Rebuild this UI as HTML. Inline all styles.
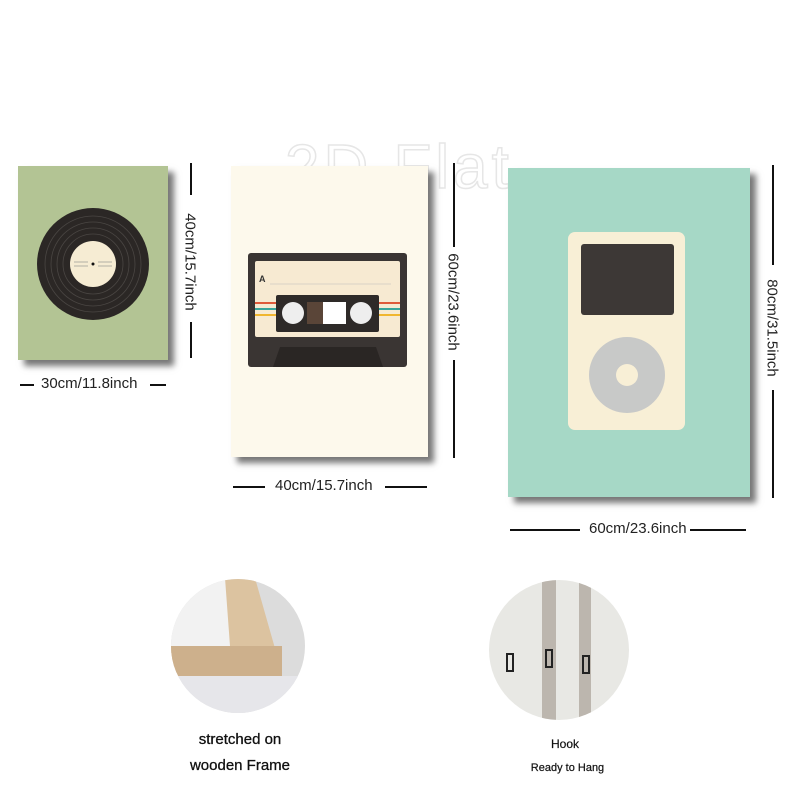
<!DOCTYPE html>
<html><head><style>
body{margin:0;width:800px;height:800px;background:#fff;position:relative;overflow:hidden;font-family:"Liberation Sans",sans-serif}
.a{position:absolute}
.t{font-size:15px;color:#222;white-space:nowrap}
.ln{position:absolute;background:#111}
</style></head><body>
<div class="a" style="left:285px;top:132px;font-size:62px;color:#fff;-webkit-text-stroke:1.5px #e6e6e6;letter-spacing:4px;">2D Flat</div>

<!-- panel1 -->
<div class="a" style="left:18px;top:166px;width:150px;height:194px;background:#b3c494;box-shadow:6px 6px 6px #777"></div>
<svg class="a" style="left:18px;top:166px" width="150" height="194">
<circle cx="75" cy="98" r="56" fill="#2b2725"/>
<circle cx="75" cy="98" r="48" fill="none" stroke="#4a4643" stroke-width="0.8"/>
<circle cx="75" cy="98" r="42" fill="none" stroke="#4a4643" stroke-width="0.8"/>
<circle cx="75" cy="98" r="36" fill="none" stroke="#4a4643" stroke-width="0.8"/>
<circle cx="75" cy="98" r="30" fill="none" stroke="#4a4643" stroke-width="0.8"/>
<circle cx="75" cy="98" r="23" fill="#f6ecd3"/>
<line x1="56" y1="96" x2="70" y2="96" stroke="#888" stroke-width="0.6"/><line x1="80" y1="96" x2="94" y2="96" stroke="#888" stroke-width="0.6"/>
<line x1="56" y1="100" x2="70" y2="100" stroke="#888" stroke-width="0.6"/><line x1="80" y1="100" x2="94" y2="100" stroke="#888" stroke-width="0.6"/>
<circle cx="75" cy="98" r="1.5" fill="#111"/>
</svg>
<div class="ln" style="left:190px;top:163px;width:1.5px;height:32px"></div>
<div class="ln" style="left:190px;top:322px;width:1.5px;height:36px"></div>
<div class="a t" style="left:190px;top:262px;transform:translate(-50%,-50%) rotate(90deg)">40cm/15.7inch</div>
<div class="ln" style="left:20px;top:384px;width:14px;height:1.5px"></div>
<div class="ln" style="left:150px;top:384px;width:16px;height:1.5px"></div>
<div class="a t" style="left:41px;top:375px">30cm/11.8inch</div>

<!-- panel2 -->
<div class="a" style="left:231px;top:166px;width:197px;height:291px;background:#fdf9ec;box-shadow:6px 6px 6px #777"></div>
<svg class="a" style="left:248px;top:253px" width="160" height="115">
<rect x="0" y="0" width="159" height="114" rx="3" fill="#3a3533"/>
<rect x="7" y="8" width="145" height="76" rx="2" fill="#f7ead2"/>
<text x="11" y="29" font-size="9" font-weight="bold" font-family="Liberation Sans" fill="#333">A</text>
<line x1="22" y1="31" x2="143" y2="31" stroke="#bbb" stroke-width="0.6"/>
<rect x="7" y="49" width="145" height="2" fill="#e05a3a"/>
<rect x="7" y="55" width="145" height="2" fill="#3aa59a"/>
<rect x="7" y="61" width="145" height="2" fill="#f0b630"/>
<rect x="28" y="42" width="103" height="37" rx="2" fill="#2e2a28"/>
<circle cx="45" cy="60" r="11" fill="#eee"/><circle cx="113" cy="60" r="11" fill="#eee"/>
<rect x="59" y="49" width="16" height="22" fill="#5a4538"/>
<rect x="75" y="49" width="23" height="22" fill="#fff"/>
<path d="M25 114 L32 94 L128 94 L135 114Z" fill="#2a2624"/>
</svg>
<div class="ln" style="left:453px;top:163px;width:1.5px;height:84px"></div>
<div class="ln" style="left:453px;top:360px;width:1.5px;height:98px"></div>
<div class="a t" style="left:453px;top:302px;transform:translate(-50%,-50%) rotate(90deg)">60cm/23.6inch</div>
<div class="ln" style="left:233px;top:486px;width:32px;height:1.5px"></div>
<div class="ln" style="left:385px;top:486px;width:42px;height:1.5px"></div>
<div class="a t" style="left:275px;top:477px">40cm/15.7inch</div>

<!-- panel3 -->
<div class="a" style="left:508px;top:168px;width:242px;height:329px;background:#a6d8c6;box-shadow:6px 6px 6px #777"></div>
<div class="a" style="left:568px;top:232px;width:117px;height:198px;background:#f8efd6;border-radius:7px"></div>
<div class="a" style="left:581px;top:244px;width:93px;height:71px;background:#3d3836;border-radius:3px"></div>
<div class="a" style="left:589px;top:337px;width:76px;height:76px;background:#c8c9c8;border-radius:50%"></div>
<div class="a" style="left:616px;top:364px;width:22px;height:22px;background:#f8efd6;border-radius:50%"></div>
<div class="ln" style="left:772px;top:165px;width:1.5px;height:100px"></div>
<div class="ln" style="left:772px;top:390px;width:1.5px;height:108px"></div>
<div class="a t" style="left:772px;top:328px;transform:translate(-50%,-50%) rotate(90deg)">80cm/31.5inch</div>
<div class="ln" style="left:510px;top:529px;width:70px;height:1.5px"></div>
<div class="ln" style="left:690px;top:529px;width:56px;height:1.5px"></div>
<div class="a t" style="left:589px;top:520px">60cm/23.6inch</div>

<!-- circles -->
<svg class="a" style="left:170px;top:578px" width="136" height="136">
<defs><clipPath id="c1"><circle cx="68" cy="68" r="67"/></clipPath></defs>
<g clip-path="url(#c1)">
<rect width="136" height="136" fill="#dcdcdc"/>
<rect x="0" y="0" width="60" height="70" fill="#f2f2f2"/>
<path d="M55 0 L85 0 L112 95 L0 95 L0 68 L60 68Z" fill="#dcc3a0"/>
<rect x="0" y="68" width="112" height="30" fill="#cdb08c"/>
<rect x="0" y="98" width="136" height="40" fill="#e6e6ea"/>
</g></svg>
<svg class="a" style="left:489px;top:580px" width="140" height="140">
<defs><clipPath id="c2"><circle cx="70" cy="70" r="70"/></clipPath></defs>
<g clip-path="url(#c2)">
<rect width="140" height="140" fill="#e8e8e4"/>
<rect x="53" y="0" width="14" height="140" fill="#bcb6ae"/>
<rect x="90" y="0" width="12" height="140" fill="#bcb6ae"/>
<rect x="18" y="74" width="6" height="17" fill="none" stroke="#222" stroke-width="2"/>
<rect x="57" y="70" width="6" height="17" fill="none" stroke="#222" stroke-width="2"/>
<rect x="94" y="76" width="6" height="17" fill="none" stroke="#222" stroke-width="2"/>
</g></svg>
<div class="a" style="left:170px;top:727px;width:140px;text-align:center;font-size:15px;color:#111;line-height:26px;-webkit-text-stroke:0.3px #111">stretched on<br>wooden Frame</div>
<div class="a" style="left:510px;top:737px;width:110px;text-align:center;font-size:12px;color:#111;-webkit-text-stroke:0.2px #111">Hook</div>
<div class="a" style="left:510px;top:762px;width:115px;text-align:center;font-size:11px;color:#111;-webkit-text-stroke:0.2px #111">Ready to Hang</div>
</body></html>
